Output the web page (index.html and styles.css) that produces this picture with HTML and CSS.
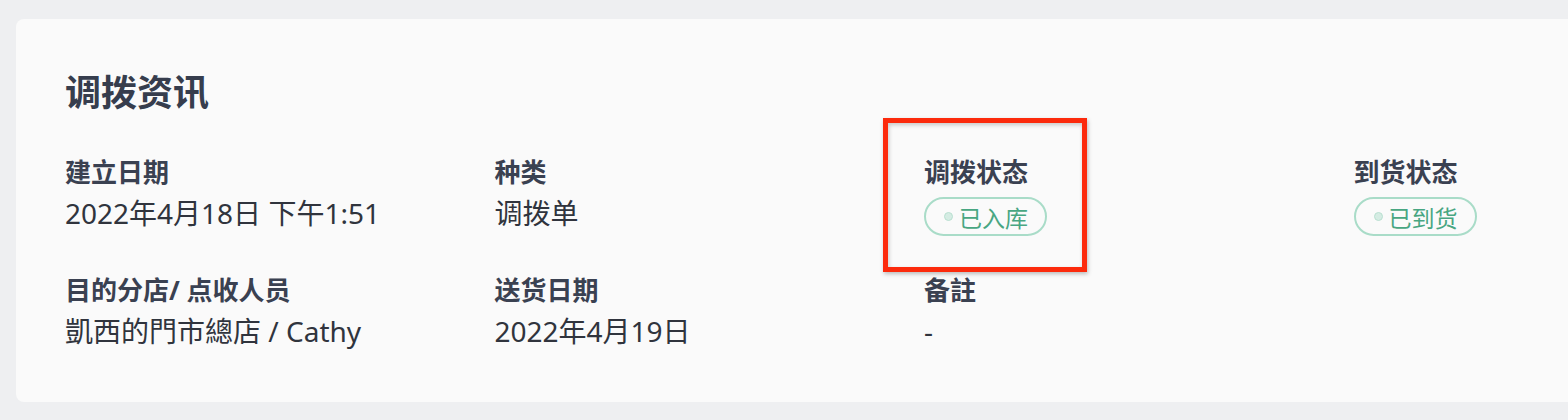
FILE: index.html
```
<!DOCTYPE html>
<html>
<head>
	<title>调拨资讯</title>
	<link rel="stylesheet" href="styles.css">
</head>
<body>
	<div class="card">
		<h2 class="card-title">调拨资讯</h2>
		<div class="info-grid">
			<div class="field">
				<div class="label">建立日期</div>
				<div class="value">2022年4月18日 下午1:51</div>
			</div>
			<div class="field">
				<div class="label">种类</div>
				<div class="value">调拨单</div>
			</div>
			<div class="field field-marked">
				<div class="label">调拨状态</div>
				<span class="badge"><span class="dot"></span>已入库</span>
				<div class="highlight"></div>
			</div>
			<div class="field">
				<div class="label">到货状态</div>
				<span class="badge"><span class="dot"></span>已到货</span>
			</div>
			<div class="field">
				<div class="label">目的分店/ 点收人员</div>
				<div class="value">凱西的門市總店 / Cathy</div>
			</div>
			<div class="field">
				<div class="label">送货日期</div>
				<div class="value">2022年4月19日</div>
			</div>
			<div class="field">
				<div class="label">备註</div>
				<div class="value">-</div>
			</div>
			<div class="field"></div>
		</div>
	</div>
</body>
</html>
```

FILE: styles.css
```
body {
	margin: 0;
	background-color: #eeeff1;
	font-family: "Noto Sans", "Noto Sans CJK SC", sans-serif;
	overflow: hidden;
}
.card {
	width: 1718px;
	margin: 19px 0 0 16px;
	padding: 52px 49px 51px;
	background-color: #fafafa;
	border-radius: 8px;
}
.card-title {
	margin: 0 0 40px;
	font-size: 36px;
	line-height: 43px;
	font-weight: 700;
	color: #363d4d;
}
.info-grid {
	display: grid;
	grid-template-columns: repeat(4, 429.5px);
	row-gap: 36px;
}
.field {
	display: flex;
	flex-direction: column;
	align-items: flex-start;
}
.field-marked {
	position: relative;
}
.label {
	font-size: 26px;
	line-height: 36px;
	font-weight: 700;
	color: #3a4151;
	margin-bottom: 4px;
}
.value {
	font-size: 28px;
	line-height: 39px;
	color: #30343d;
}
.badge {
	display: inline-flex;
	align-items: center;
	gap: 6px;
	height: 39px;
	box-sizing: border-box;
	margin-top: 3px;
	padding: 0 17px 0 18px;
	border: 2px solid #a9dcc8;
	border-radius: 20px;
	font-size: 23px;
	color: #48a682;
}
.dot {
	width: 7px;
	height: 7px;
	border-radius: 50%;
	background-color: #d5ece3;
	border: 1px solid #b9e0d1;
}
.highlight {
	position: absolute;
	left: -41px;
	top: -36px;
	width: 204px;
	height: 154px;
	box-sizing: border-box;
	border: 5px solid #fc2a0c;
	box-shadow: 1px 2px 4px rgba(0, 0, 0, 0.25), inset 1px 2px 4px rgba(0, 0, 0, 0.2);
}
```
